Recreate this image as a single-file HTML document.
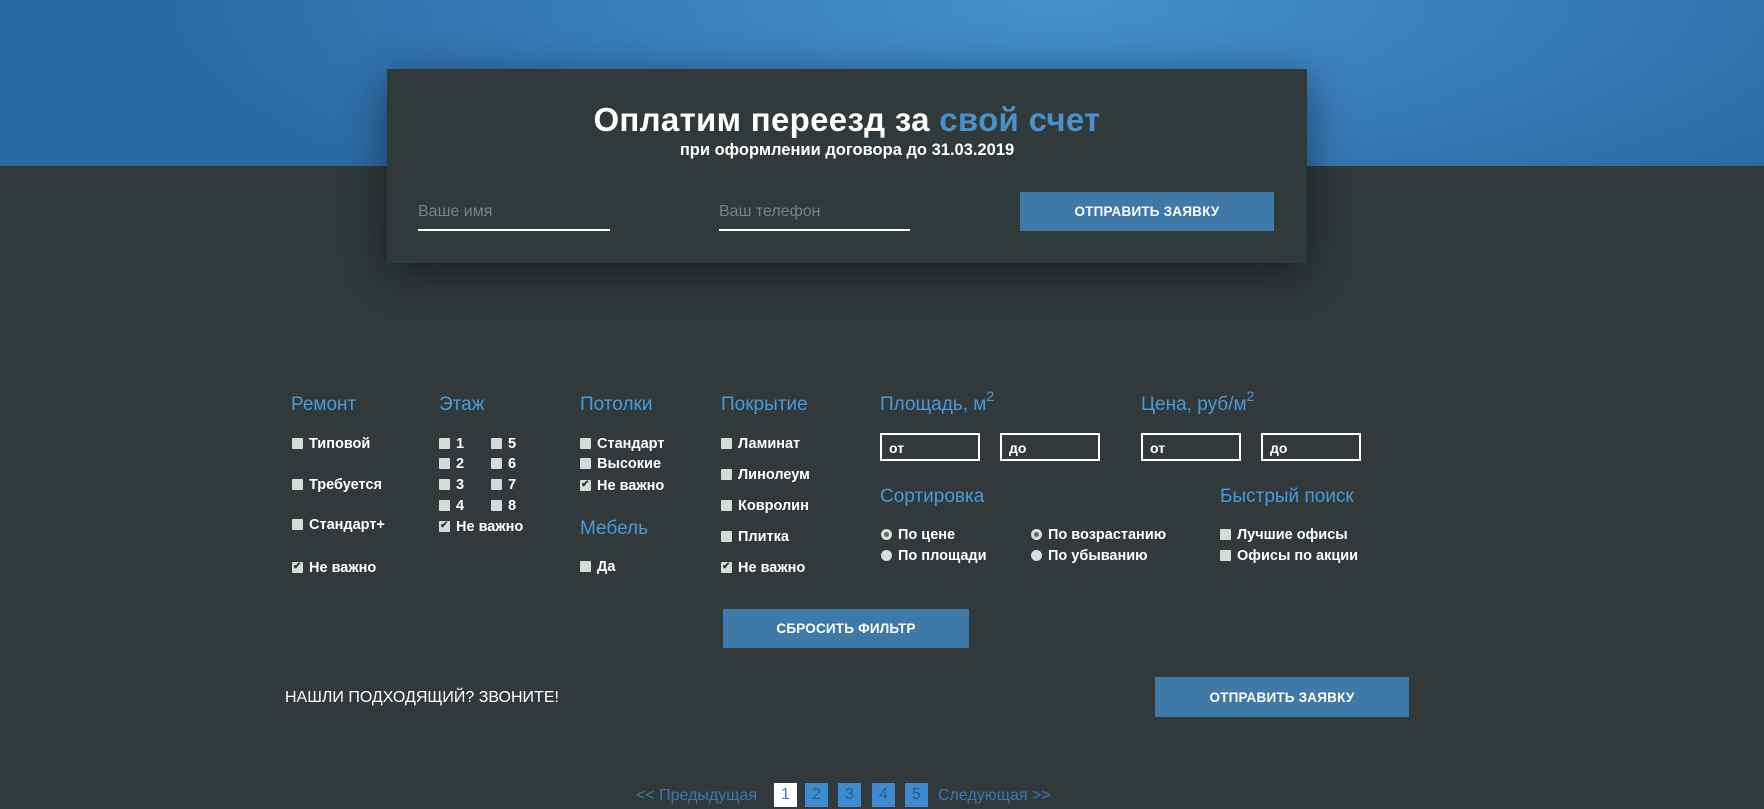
<!DOCTYPE html>
<html><head><meta charset="utf-8"><style>
*{margin:0;padding:0;box-sizing:border-box}
body{width:1764px;height:807px;overflow:hidden;background:#31393b;font-family:"Liberation Sans",sans-serif;position:relative;color:#fff}
.band{position:absolute;left:0;top:0;width:1764px;height:166px;background:radial-gradient(ellipse 900px 260px at 1060px 0px,#4590cc 0%,#3a7fbd 45%,#2c6aa3 100%)}
.card{position:absolute;left:387px;top:69px;width:920px;height:194px;background:#313a3b;box-shadow:0 10px 40px rgba(0,0,0,.45)}
.a{position:absolute;white-space:nowrap}
.h1{left:0;width:920px;text-align:center;top:32px;font-size:33px;font-weight:bold;letter-spacing:.3px}
.h1 span{color:#4b8fcb}
.h2{left:0;width:920px;text-align:center;top:72px;font-size:16.5px;font-weight:bold}
.ph{color:#7b8283;font-size:16px}
.ul{height:2px;background:#fff}
.btn{position:absolute;background:#3f79a7;color:#fff;font-weight:bold;font-size:13.5px;display:flex;align-items:center;justify-content:center;letter-spacing:.2px}
.hd{position:absolute;color:#4b9ad8;font-size:19px;white-space:nowrap}
.hd sup{font-size:14px;vertical-align:9px;line-height:0}
.it{position:absolute;font-size:14.5px;font-weight:bold;white-space:nowrap;line-height:16px}
.it i{display:inline-block;width:11px;height:11px;background:#d9d9d9;border-radius:1px;margin-right:6px;vertical-align:-1px;position:relative}
.it i.c::after{content:"✔";position:absolute;left:1px;top:-3px;font-size:10px;color:#333;font-style:normal}
.it b{display:inline-block;width:11px;height:11px;background:#ddd;border-radius:50%;margin-right:6px;vertical-align:-1px;position:relative}
.it b.c::after{content:"";position:absolute;left:3px;top:3px;width:5px;height:5px;border-radius:50%;background:#666}
.inp{position:absolute;width:100px;height:28px;border:2px solid #fff;font-size:14px;font-weight:bold;padding:5px 0 0 7px}
.pg{position:absolute;top:783px;font-size:16px;color:#3d78b0;white-space:nowrap}
.pb{position:absolute;top:783px;width:23px;height:24px;background:#3d8ad0;color:#2d5c86;font-size:16px;text-align:center;line-height:24px}
</style></head><body>
<div class="band"></div>
<div class="card">
<div class="a h1">Оплатим переезд за <span>свой счет</span></div>
<div class="a h2">при оформлении договора до 31.03.2019</div>
<div class="a ph" style="left:31px;top:134px">Ваше имя</div>
<div class="a ul" style="left:31px;top:160px;width:192px"></div>
<div class="a ph" style="left:332px;top:134px">Ваш телефон</div>
<div class="a ul" style="left:332px;top:160px;width:191px"></div>
<div class="btn" style="left:633px;top:123px;width:254px;height:39px">ОТПРАВИТЬ ЗАЯВКУ</div>
</div>

<div class="hd" style="left:291px;top:394px">Ремонт</div>
<div class="hd" style="left:439px;top:394px">Этаж</div>
<div class="hd" style="left:580px;top:394px">Потолки</div>
<div class="hd" style="left:721px;top:394px">Покрытие</div>
<div class="hd" style="left:880px;top:394px">Площадь, м<sup>2</sup></div>
<div class="hd" style="left:1141px;top:394px">Цена, руб/м<sup>2</sup></div>

<div class="it" style="left:292px;top:436px"><i></i>Типовой</div>
<div class="it" style="left:292px;top:477px"><i></i>Требуется</div>
<div class="it" style="left:292px;top:517px"><i></i>Стандарт+</div>
<div class="it" style="left:292px;top:560px"><i class="c"></i>Не важно</div>

<div class="it" style="left:439px;top:436px"><i></i>1</div>
<div class="it" style="left:439px;top:456px"><i></i>2</div>
<div class="it" style="left:439px;top:477px"><i></i>3</div>
<div class="it" style="left:439px;top:498px"><i></i>4</div>
<div class="it" style="left:439px;top:519px"><i class="c"></i>Не важно</div>
<div class="it" style="left:491px;top:436px"><i></i>5</div>
<div class="it" style="left:491px;top:456px"><i></i>6</div>
<div class="it" style="left:491px;top:477px"><i></i>7</div>
<div class="it" style="left:491px;top:498px"><i></i>8</div>

<div class="it" style="left:580px;top:436px"><i></i>Стандарт</div>
<div class="it" style="left:580px;top:456px"><i></i>Высокие</div>
<div class="it" style="left:580px;top:478px"><i class="c"></i>Не важно</div>
<div class="hd" style="left:580px;top:518px">Мебель</div>
<div class="it" style="left:580px;top:559px"><i></i>Да</div>

<div class="it" style="left:721px;top:436px"><i></i>Ламинат</div>
<div class="it" style="left:721px;top:467px"><i></i>Линолеум</div>
<div class="it" style="left:721px;top:498px"><i></i>Ковролин</div>
<div class="it" style="left:721px;top:529px"><i></i>Плитка</div>
<div class="it" style="left:721px;top:560px"><i class="c"></i>Не важно</div>

<div class="inp" style="left:880px;top:433px">от</div>
<div class="inp" style="left:1000px;top:433px">до</div>
<div class="inp" style="left:1141px;top:433px">от</div>
<div class="inp" style="left:1261px;top:433px">до</div>

<div class="hd" style="left:880px;top:486px">Сортировка</div>
<div class="hd" style="left:1220px;top:486px">Быстрый поиск</div>
<div class="it" style="left:881px;top:527px"><b class="c"></b>По цене</div>
<div class="it" style="left:881px;top:548px"><b></b>По площади</div>
<div class="it" style="left:1031px;top:527px"><b class="c"></b>По возрастанию</div>
<div class="it" style="left:1031px;top:548px"><b></b>По убыванию</div>
<div class="it" style="left:1220px;top:527px"><i></i>Лучшие офисы</div>
<div class="it" style="left:1220px;top:548px"><i></i>Офисы по акции</div>

<div class="btn" style="left:723px;top:609px;width:246px;height:39px">СБРОСИТЬ ФИЛЬТР</div>
<div class="a" style="left:285px;top:689px;font-size:16px">НАШЛИ ПОДХОДЯЩИЙ? ЗВОНИТЕ!</div>
<div class="btn" style="left:1155px;top:677px;width:254px;height:40px">ОТПРАВИТЬ ЗАЯВКУ</div>

<div class="pg" style="left:636px;line-height:26px">&lt;&lt; Предыдущая</div>
<div class="pb" style="left:774px;background:#fff;color:#3d78b0">1</div>
<div class="pb" style="left:805px">2</div>
<div class="pb" style="left:838px">3</div>
<div class="pb" style="left:872px">4</div>
<div class="pb" style="left:905px">5</div>
<div class="pg" style="left:938px;line-height:26px">Следующая &gt;&gt;</div>
</body></html>
